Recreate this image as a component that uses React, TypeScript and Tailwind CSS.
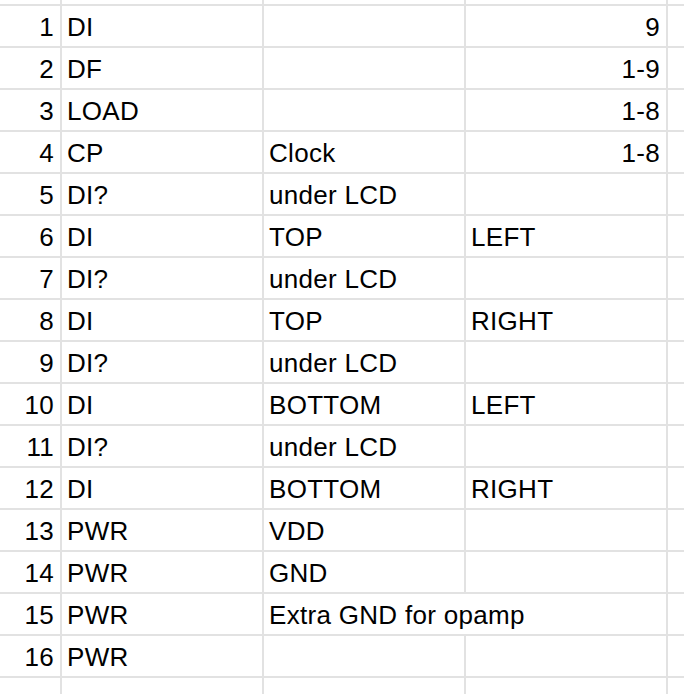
import React from 'react';

type Row = { n: number; b: string; c?: string; d?: string; num?: boolean; wide?: boolean };

const rows: Row[] = [
  { n: 1, b: 'DI', d: '9', num: true },
  { n: 2, b: 'DF', d: '1-9', num: true },
  { n: 3, b: 'LOAD', d: '1-8', num: true },
  { n: 4, b: 'CP', c: 'Clock', d: '1-8', num: true },
  { n: 5, b: 'DI?', c: 'under LCD' },
  { n: 6, b: 'DI', c: 'TOP', d: 'LEFT' },
  { n: 7, b: 'DI?', c: 'under LCD' },
  { n: 8, b: 'DI', c: 'TOP', d: 'RIGHT' },
  { n: 9, b: 'DI?', c: 'under LCD' },
  { n: 10, b: 'DI', c: 'BOTTOM', d: 'LEFT' },
  { n: 11, b: 'DI?', c: 'under LCD' },
  { n: 12, b: 'DI', c: 'BOTTOM', d: 'RIGHT' },
  { n: 13, b: 'PWR', c: 'VDD' },
  { n: 14, b: 'PWR', c: 'GND' },
  { n: 15, b: 'PWR', c: 'Extra GND for opamp', wide: true },
  { n: 16, b: 'PWR' },
];

const cell = 'bg-white flex items-center pl-[5px] pr-[6px] pt-[2px] whitespace-nowrap overflow-hidden';

export default function App() {
  return (
    <div className="w-[684px] h-[694px] overflow-hidden bg-white">
      <div
        className="grid h-[694px] grid-cols-[60px_200px_200px_200px_1fr] grid-rows-[4px_repeat(16,40px)_1fr] gap-[2px] bg-[#e2e2e2] text-[26px] leading-none tracking-[0.3px] text-black"
        style={{ fontFamily: '"Liberation Sans", Arial, sans-serif' }}
      >
        {/* partial row above */}
        <div className="bg-white" />
        <div className="bg-white" />
        <div className="bg-white" />
        <div className="bg-white" />
        <div className="bg-white" />

        {rows.map((r) => (
          <React.Fragment key={r.n}>
            <div className={`${cell} justify-end`}>{r.n}</div>
            <div className={cell}>{r.b}</div>
            {r.wide ? (
              <div className={`${cell} col-span-2`}>{r.c}</div>
            ) : (
              <>
                <div className={cell}>{r.c ?? ''}</div>
                <div className={`${cell} ${r.num ? 'justify-end' : ''}`}>{r.d ?? ''}</div>
              </>
            )}
            <div className="bg-white" />
          </React.Fragment>
        ))}

        {/* partial row below */}
        <div className="bg-white" />
        <div className="bg-white" />
        <div className="bg-white" />
        <div className="bg-white" />
        <div className="bg-white" />
      </div>
    </div>
  );
}
